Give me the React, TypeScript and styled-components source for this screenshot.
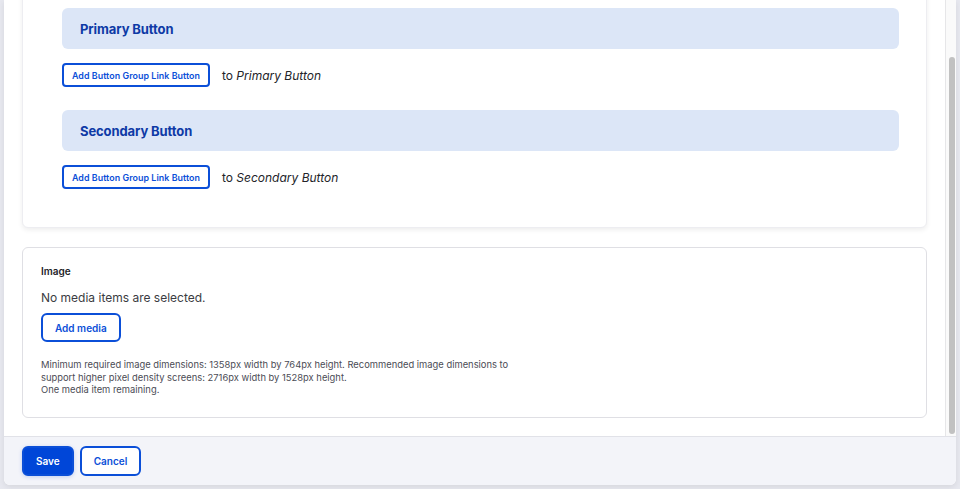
import React, { useLayoutEffect, useRef, useState } from "react";
import styled, { createGlobalStyle } from "styled-components";

const Global = createGlobalStyle`
  html, body { margin: 0; padding: 0; }
  body {
    background: #e7e8ef;
    font-family: Inter, "Noto Sans", "Liberation Sans", sans-serif;
    color: #232429;
    -webkit-font-smoothing: antialiased;
  }
  * { box-sizing: border-box; }
`;

const Backdrop = styled.div`
  width: 960px;
  height: 489px;
  padding: 0 4px 4px 4px;
  overflow: hidden;
`;

const Dialog = styled.div`
  height: 485px;
  display: flex;
  flex-direction: column;
  background: #fff;
  border-radius: 0 0 6px 6px;
  box-shadow: 0 2px 6px rgba(0, 0, 0, 0.08);
  overflow: hidden;
`;

const Body = styled.div`
  flex: 1;
  min-height: 0;
  display: flex;
`;

const ScrollArea = styled.div`
  flex: 1;
  min-width: 0;
  overflow-y: scroll;
  scrollbar-width: none;
  &::-webkit-scrollbar { display: none; }
  padding: 18px;
  display: flex;
  flex-direction: column;
  gap: 19px;
`;

const Track = styled.div`
  flex: none;
  width: 11px;
  background: #fafafa;
  border-left: 1px solid #e6e6e8;
  padding: 0 2px 0 2px;
`;

const Thumb = styled.div`
  width: 6px;
  margin-left: 1px;
  background: #c1c1c1;
  border-radius: 3px;
`;

const Card = styled.div`
  flex: none;
  background: #fff;
  border: 1px solid #ededf1;
  border-radius: 6px;
  box-shadow: 0 2px 5px rgba(0, 0, 0, 0.07);
  padding: 54px 27px 38px 39px;
  display: flex;
  flex-direction: column;
`;

const GroupHeader = styled.div`
  height: 41px;
  background: #dce6f7;
  border-radius: 6px;
  padding: 0 18px;
  display: flex;
  align-items: center;
  font-size: 13px;
  font-weight: 700;
  color: #0e3aa6;
  letter-spacing: -0.1px;
`;

const AddRow = styled.div<{ $last?: boolean }>`
  display: flex;
  align-items: center;
  gap: 12px;
  margin-top: 14px;
  margin-bottom: ${(p) => (p.$last ? "0" : "23px")};
  font-size: 12px;
  color: #232429;
  em { font-style: italic; }
`;

const SmallButton = styled.button`
  height: 24px;
  padding: 0 8px;
  background: #fff;
  border: 2px solid #0b4fd8;
  border-radius: 4px;
  color: #0b4fd8;
  font-family: inherit;
  font-size: 8.9px;
  font-weight: 600;
  letter-spacing: 0.05px;
  cursor: pointer;
`;

const FieldCard = styled.div`
  flex: none;
  border: 1px solid #dfdfe4;
  border-radius: 6px;
  padding: 17px 18px 20px 18px;
  display: flex;
  flex-direction: column;
`;

const Label = styled.div`
  font-size: 10px;
  font-weight: 600;
  line-height: 13px;
  color: #232429;
`;

const EmptyText = styled.div`
  margin-top: 12px;
  font-size: 12px;
  line-height: 16px;
  color: #3b3c42;
`;

const OutlineButton = styled.button<{ $primary?: boolean }>`
  height: 30px;
  padding: 0 12px;
  align-self: flex-start;
  border-radius: 6px;
  border: 2px solid #0b4fd8;
  background: ${(p) => (p.$primary ? "#0046d8" : "#fff")};
  color: ${(p) => (p.$primary ? "#fff" : "#0b4fd8")};
  font-family: inherit;
  font-size: 10px;
  font-weight: 600;
  cursor: pointer;
  ${(p) => (p.$primary ? "box-shadow: 0 1px 4px rgba(0, 70, 216, 0.2);" : "")}
`;

const MediaButton = styled(OutlineButton)`
  margin-top: 7px;
  height: 29px;
`;

const Description = styled.div`
  margin-top: 17px;
  font-size: 9.4px;
  line-height: 12.5px;
  color: #4b4c55;
`;

const Footer = styled.div`
  flex: none;
  height: 49px;
  background: #f3f4f9;
  border-top: 1px solid #e1e2e8;
  padding: 9px 18px 0 18px;
  display: flex;
  align-items: flex-start;
  gap: 6px;
`;

const groups = ["Primary Button", "Secondary Button"];

export default function App() {
  const ref = useRef<HTMLDivElement>(null);
  const [thumb, setThumb] = useState({ top: 0, height: 0 });
  useLayoutEffect(() => {
    const el = ref.current;
    if (!el) return;
    el.scrollTop = el.scrollHeight;
    const track = el.clientHeight;
    setThumb({
      top: (el.scrollTop / el.scrollHeight) * track,
      height: (el.clientHeight / el.scrollHeight) * track - 2,
    });
  }, []);
  return (
    <>
      <Global />
      <Backdrop>
        <Dialog>
          <Body>
            <ScrollArea ref={ref}>
              <Card>
                {groups.map((g, i) => (
                  <React.Fragment key={g}>
                    <GroupHeader>{g}</GroupHeader>
                    <AddRow $last={i === groups.length - 1}>
                      <SmallButton>Add Button Group Link Button</SmallButton>
                      <span>
                        to <em>{g}</em>
                      </span>
                    </AddRow>
                  </React.Fragment>
                ))}
              </Card>
              <FieldCard>
                <Label>Image</Label>
                <EmptyText>No media items are selected.</EmptyText>
                <MediaButton>Add media</MediaButton>
                <Description>
                  Minimum required image dimensions: 1358px width by 764px height. Recommended image dimensions to
                  <br />
                  support higher pixel density screens: 2716px width by 1528px height.
                  <br />
                  One media item remaining.
                </Description>
              </FieldCard>
            </ScrollArea>
            <Track>
              <Thumb style={{ marginTop: thumb.top, height: thumb.height }} />
            </Track>
          </Body>
          <Footer>
            <OutlineButton $primary>Save</OutlineButton>
            <OutlineButton>Cancel</OutlineButton>
          </Footer>
        </Dialog>
      </Backdrop>
    </>
  );
}
